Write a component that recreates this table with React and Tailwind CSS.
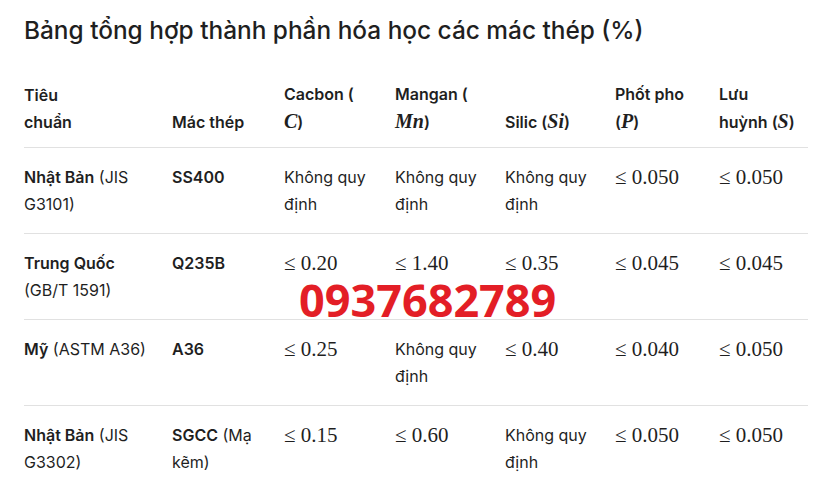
import React from 'react';

// Ký hiệu toán (kiểu KaTeX) cho các nguyên tố
const M = ({ children }) => (
  <span className="font-['Liberation_Serif',serif] italic text-[20px]">{children}</span>
);

const Le = ({ v }) => (
  <span className="font-['Liberation_Serif',serif] text-[21px]">≤ {v}</span>
);

const KQD = () => <span>Không quy định</span>;

const rows = [
  {
    std: <><b className="font-semibold">Nhật Bản</b> (JIS G3101)</>,
    mac: <b className="font-semibold">SS400</b>,
    c: <KQD />, mn: <KQD />, si: <KQD />, p: <Le v="0.050" />, s: <Le v="0.050" />,
  },
  {
    std: <><b className="font-semibold">Trung Quốc</b> (GB/T 1591)</>,
    mac: <b className="font-semibold">Q235B</b>,
    c: <Le v="0.20" />, mn: <Le v="1.40" />, si: <Le v="0.35" />, p: <Le v="0.045" />, s: <Le v="0.045" />,
  },
  {
    std: <><b className="font-semibold">Mỹ</b> (ASTM A36)</>,
    mac: <b className="font-semibold">A36</b>,
    c: <Le v="0.25" />, mn: <KQD />, si: <Le v="0.40" />, p: <Le v="0.040" />, s: <Le v="0.050" />,
  },
  {
    std: <><b className="font-semibold">Nhật Bản</b> (JIS G3302)</>,
    mac: <><b className="font-semibold">SGCC</b> (Mạ kẽm)</>,
    c: <Le v="0.15" />, mn: <Le v="0.60" />, si: <KQD />, p: <Le v="0.050" />, s: <Le v="0.050" />,
  },
];

export default function App() {
  return (
    <div className="relative w-[818px] h-[501px] bg-white text-[#1f1f1f] font-['Inter',sans-serif] overflow-hidden">
      <h1 className="pl-6 pt-[14px] text-[24.4px] leading-[32px] font-medium">
        Bảng tổng hợp thành phần hóa học các mác thép (%)
      </h1>

      <table className="ml-6 mt-[35px] w-[784px] table-fixed border-collapse text-[16px] leading-[27px]">
        <colgroup>
          <col className="w-[148px]" />
          <col className="w-[112px]" />
          <col className="w-[111px]" />
          <col className="w-[110px]" />
          <col className="w-[110px]" />
          <col className="w-[104px]" />
          <col />
        </colgroup>
        <thead>
          <tr className="border-b border-[#e1e1e1] align-bottom text-left">
            <th className="pb-[11px] pr-3 font-semibold">Tiêu<br />chuẩn</th>
            <th className="pb-[11px] pr-3 font-semibold">Mác thép</th>
            <th className="pb-[11px] pr-3 font-semibold">Cacbon (<br /><M>C</M>)</th>
            <th className="pb-[11px] pr-3 font-semibold">Mangan (<br /><M>Mn</M>)</th>
            <th className="pb-[11px] pr-3 font-semibold">Silic (<M>Si</M>)</th>
            <th className="pb-[11px] pr-3 font-semibold">Phốt pho<br />(<M>P</M>)</th>
            <th className="pb-[11px] font-semibold">Lưu<br />huỳnh (<M>S</M>)</th>
          </tr>
        </thead>
        <tbody>
          {rows.map((r, i) => (
            <tr key={i} className={i < rows.length - 1 ? 'border-b border-[#e1e1e1] align-top' : 'align-top'}>
              <td className="pt-4 pb-[15px] pr-3">{r.std}</td>
              <td className="pt-4 pb-[15px] pr-3">{r.mac}</td>
              <td className="pt-4 pb-[15px] pr-3">{r.c}</td>
              <td className="pt-4 pb-[15px] pr-3">{r.mn}</td>
              <td className="pt-4 pb-[15px] pr-3">{r.si}</td>
              <td className="pt-4 pb-[15px] pr-3">{r.p}</td>
              <td className="pt-4 pb-[15px]">{r.s}</td>
            </tr>
          ))}
        </tbody>
      </table>

      {/* Số điện thoại đóng dấu đè lên bảng */}
      <div className="absolute left-[299px] top-[270px] text-[45px] leading-[60px] font-bold text-[#e31e26] font-['Open_Sans',sans-serif]">
        0937682789
      </div>
    </div>
  );
}
